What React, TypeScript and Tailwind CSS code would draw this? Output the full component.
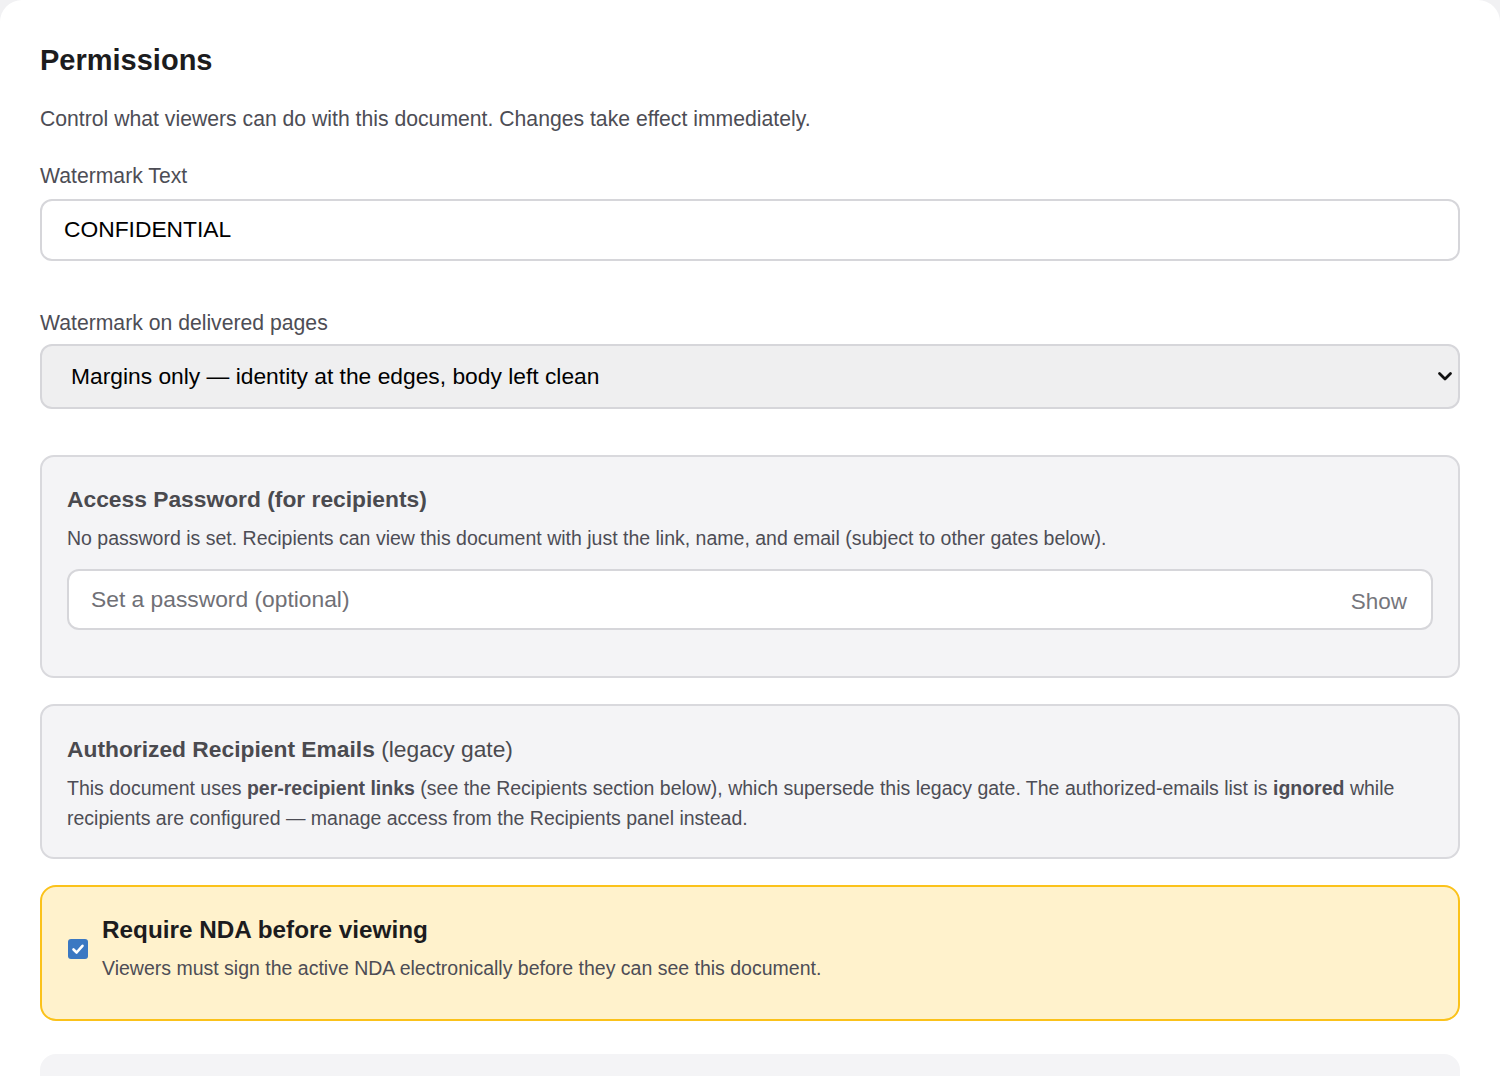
const ChevronDown = () => (
  <svg width="16" height="16" viewBox="0 0 16 16" fill="none">
    <path d="M2.5 5.5 8 11l5.5-5.5" stroke="#111" strokeWidth="2.8" strokeLinecap="round" strokeLinejoin="round" />
  </svg>
);

const CheckMark = () => (
  <svg width="14" height="14" viewBox="0 0 14 14" fill="none">
    <path d="M2.5 7.5 5.6 10.5 11.5 3.8" stroke="white" strokeWidth="2.6" strokeLinecap="round" strokeLinejoin="round" />
  </svg>
);

export default function App() {
  return (
    <div className="min-h-screen bg-[#f1f1f3] font-['Liberation_Sans',Arial,sans-serif]">
      <div className="bg-white rounded-t-[22px] px-10 pt-[43px] pb-10">
        <h2 className="text-[29px] leading-[1.2] font-bold text-[#1c1c1e]">Permissions</h2>
        <p className="mt-[26px] text-[21.2px] leading-[30px] text-[#4d4d55]">
          Control what viewers can do with this document. Changes take effect immediately.
        </p>

        <label className="block mt-[27px] mb-2 text-[21.2px] leading-[30px] text-[#4d4d55]">Watermark Text</label>
        <input
          readOnly
          defaultValue="CONFIDENTIAL"
          className="block w-full h-[62px] rounded-[12px] border-2 border-[#d6d6da] bg-white px-[22px] text-[22.8px] text-black outline-none"
        />

        <label className="block mt-[47px] mb-[6px] text-[21.2px] leading-[30px] text-[#4d4d55]">Watermark on delivered pages</label>
        <div className="relative">
          <select
            defaultValue="margins"
            className="block w-full h-[65px] appearance-none rounded-[12px] border-2 border-[#d6d6da] bg-[#efeff0] pl-[29px] pr-12 text-[22.8px] text-black outline-none"
          >
            <option value="margins">Margins only — identity at the edges, body left clean</option>
            <option value="full">Full page</option>
            <option value="none">None</option>
          </select>
          <span className="pointer-events-none absolute right-[7px] top-1/2 -translate-y-1/2">
            <ChevronDown />
          </span>
        </div>

        <div className="mt-[46px] flex flex-col gap-[26px]">
          <section className="rounded-[14px] border-2 border-[#d9d9dd] bg-[#f4f4f6] px-[25px] pt-[28px] pb-[46px]">
            <h3 className="text-[22.8px] leading-[28px] font-bold text-[#4a4a4f]">Access Password (for recipients)</h3>
            <p className="mt-[10px] text-[19.5px] leading-[30px] text-[#4d4d55]">
              No password is set. Recipients can view this document with just the link, name, and email (subject to other gates below).
            </p>
            <div className="mt-[16px] flex h-[61px] items-center rounded-[12px] border-2 border-[#d6d6da] bg-white pl-[22px] pr-[24px]">
              <input
                type="password"
                placeholder="Set a password (optional)"
                className="flex-1 bg-transparent text-[22.8px] text-black placeholder:text-[#707076] outline-none"
              />
              <button className="pt-[6px] text-[22.5px] text-[#76767c]">Show</button>
            </div>
          </section>

          <section className="rounded-[14px] border-2 border-[#d9d9dd] bg-[#f4f4f6] px-[25px] pt-[29px] pb-[24px]">
            <h3 className="text-[22.8px] leading-[28px] text-[#4a4a4f]">
              <span className="font-bold">Authorized Recipient Emails</span> (legacy gate)
            </h3>
            <p className="mt-[10px] text-[19.5px] leading-[30px] text-[#4d4d55]">
              This document uses <strong className="font-bold">per-recipient links</strong> (see the Recipients section below), which supersede this legacy gate. The authorized-emails list is <strong className="font-bold">ignored</strong> while recipients are configured — manage access from the Recipients panel instead.
            </p>
          </section>

          <section className="flex items-center gap-[14px] rounded-[16px] border-2 border-[#fbc21a] bg-[#fff2cc] px-[26px] pt-[28px] pb-[36px]">
            <span className="flex h-5 w-5 shrink-0 items-center justify-center rounded-[3px] bg-[#3b78c2]">
              <CheckMark />
            </span>
            <div>
              <h3 className="text-[24.3px] leading-[29px] font-bold text-[#1c1c1e]">Require NDA before viewing</h3>
              <p className="mt-[9px] text-[19.5px] leading-[30px] text-[#4d4d55]">
                Viewers must sign the active NDA electronically before they can see this document.
              </p>
            </div>
          </section>

          <section className="mt-[7px] h-[120px] rounded-[16px] bg-[#f4f4f6]" />
        </div>
      </div>
    </div>
  );
}
